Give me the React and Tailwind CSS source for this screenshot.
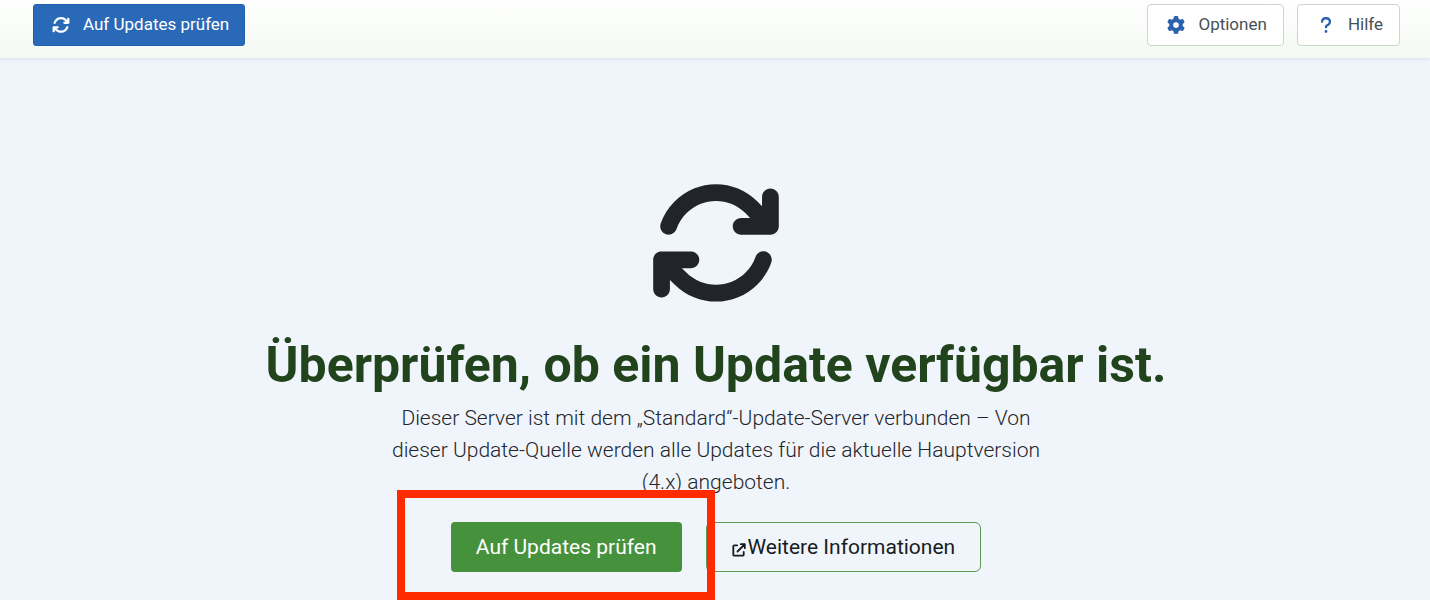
import React from 'react';
import { FaArrowsRotate, FaGear, FaQuestion } from 'react-icons/fa6';

function ExternalIcon() {
  return (
    <svg viewBox="0 0 14 14" className="w-3.5 h-3.5 mt-1" fill="none" stroke="currentColor" strokeWidth="1.8" strokeLinecap="round" strokeLinejoin="round" aria-hidden="true">
      <path d="M5.2 2.3H2.3a1 1 0 0 0-1 1v8.4a1 1 0 0 0 1 1h8.4a1 1 0 0 0 1-1V8.9" />
      <path d="M5.5 8.5l7-7M8.8 1.2h4v4" />
    </svg>
  );
}

function ToolbarButton({ icon: Icon, primary, children }) {
  return (
    <button
      type="button"
      className={`flex items-center h-[42px] border text-[17px] ${primary ? 'px-[15px] rounded-[3px] border-[#1f5fae] bg-[#2a69b8] text-white' : 'px-4 rounded border-[#ccd6cc] bg-white text-[#495057]'}`}
    >
      <Icon className={`w-6 h-[18px] mr-[10px] ${primary ? 'text-white' : 'text-[#2a62ad]'}`} />
      {children}
    </button>
  );
}

function Toolbar() {
  return (
    <header className="flex items-start justify-between h-[58px] pt-1 pl-[33px] pr-[30px] bg-linear-to-b from-[#fefffe] to-[#f4f9f2] shadow-[0_1px_4px_#d9e0e8]">
      <ToolbarButton icon={FaArrowsRotate} primary>Auf Updates prüfen</ToolbarButton>
      <div className="flex gap-[13px]">
        <ToolbarButton icon={FaGear}>Optionen</ToolbarButton>
        <ToolbarButton icon={FaQuestion}>Hilfe</ToolbarButton>
      </div>
    </header>
  );
}

export default function App() {
  return (
    <div className="min-h-screen overflow-hidden bg-[#f0f4fb] font-[Roboto,sans-serif] text-[#22262a]">
      <Toolbar />
      <main className="flex flex-col items-center pt-[118px] pl-[2px] text-center">
        <FaArrowsRotate className="w-[134px] h-[134px] text-[#212529]" />
        <h1 className="mt-[25px] text-[50px] leading-[60px] font-bold text-[#22441c]">Überprüfen, ob ein Update verfügbar ist.</h1>
        <p className="mt-[7px] max-w-[660px] text-[21px] leading-8 font-light">
          Dieser Server ist mit dem „Standard“-Update-Server verbunden – Von dieser Update-Quelle werden alle Updates für die aktuelle Hauptversion (4.x) angeboten.
        </p>
        <div className="flex gap-6 mt-6 text-[21px]">
          <div className="relative">
            <button type="button" className="h-[50px] px-[25px] pt-px rounded bg-[#46913c] text-white">Auf Updates prüfen</button>
            <div className="absolute -top-8 -bottom-7 -left-[54px] -right-[33px] z-10 border-8 border-[#ff2b00] pointer-events-none" />
          </div>
          <a href="#informationen" className="flex items-center gap-[2px] h-[50px] px-[25px] pt-px rounded-md border border-[#5d9a56] text-[#181c20]">
            <ExternalIcon />
            Weitere Informationen
          </a>
        </div>
      </main>
    </div>
  );
}
